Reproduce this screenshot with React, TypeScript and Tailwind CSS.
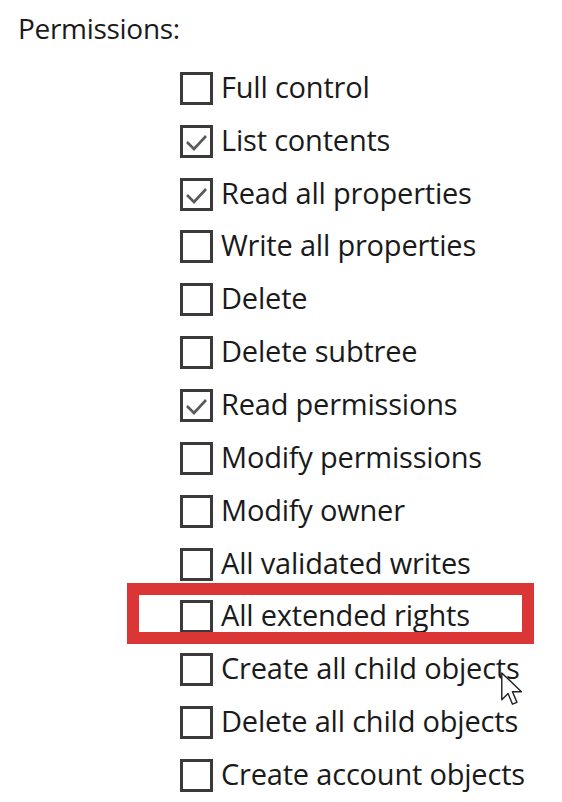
import React from "react";

const items: { label: string; checked: boolean }[] = [
  { label: "Full control", checked: false },
  { label: "List contents", checked: true },
  { label: "Read all properties", checked: true },
  { label: "Write all properties", checked: false },
  { label: "Delete", checked: false },
  { label: "Delete subtree", checked: false },
  { label: "Read permissions", checked: true },
  { label: "Modify permissions", checked: false },
  { label: "Modify owner", checked: false },
  { label: "All validated writes", checked: false },
  { label: "All extended rights", checked: false },
  { label: "Create all child objects", checked: false },
  { label: "Delete all child objects", checked: false },
  { label: "Create account objects", checked: false },
];

function Box({ checked }: { checked: boolean }) {
  return (
    <div className="w-[33px] h-[33px] border-[3px] border-[#3a3a3a] bg-white shrink-0 flex items-center justify-center">
      {checked && (
        <svg width="27" height="27" viewBox="0 0 27 27">
          <path d="M4 14 L11 21 L23 8" fill="none" stroke="#5a5a5a" strokeWidth="2.6" />
        </svg>
      )}
    </div>
  );
}

export default function App() {
  return (
    <div
      className="w-[562px] h-[802px] bg-white overflow-hidden pt-[8px] pl-[18px] text-[#1a1a1a]"
      style={{ fontFamily: '"Open Sans", "Noto Sans", sans-serif' }}
    >
      <div className="text-[28px] leading-[40px] h-[40px] tracking-[-0.3px]">Permissions:</div>
      <div className="mt-[14px] ml-[162px]">
        {items.map((it, i) => (
          <div key={i} className="relative flex items-center h-[52.85px] gap-[8px]">
            <Box checked={it.checked} />
            <span className="relative top-[-2px] text-[29px] leading-none tracking-[-0.2px] whitespace-nowrap">
              {it.label}
            </span>
            {it.label === "All extended rights" && (
              <div className="absolute left-[-53px] top-[-7px] w-[407px] h-[61px] border-[12px] border-[#dc3535]" />
            )}
            {it.label === "Create all child objects" && (
              <svg
                className="absolute left-[320px] top-[28px]"
                width="25"
                height="36"
                viewBox="0 0 14 20"
              >
                <path
                  d="M1 1 L1 16 L4.5 12.5 L7 18.5 L9.5 17.5 L7 11.5 L12 11.5 Z"
                  fill="white"
                  stroke="#222"
                  strokeWidth="0.8"
                  strokeLinejoin="round"
                />
              </svg>
            )}
          </div>
        ))}
      </div>
    </div>
  );
}
